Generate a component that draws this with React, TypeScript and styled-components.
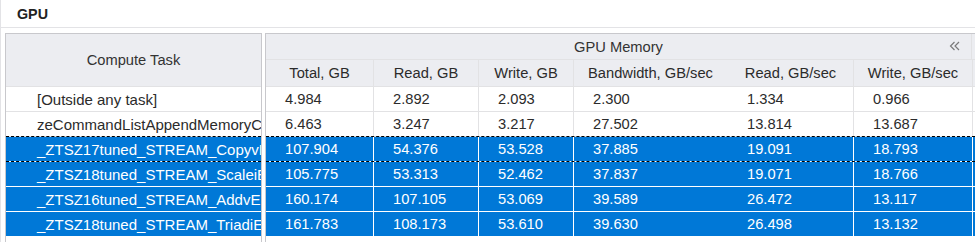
import React from 'react'
import styled, { createGlobalStyle, css } from 'styled-components'

const GlobalStyle = createGlobalStyle`
  html, body {
    margin: 0;
    padding: 0;
    background: #ffffff;
  }
  body {
    font-family: 'Liberation Sans', Arial, sans-serif;
    font-size: 14.7px;
    color: #2b2b2b;
  }
`

const BLUE = '#0078d7'
const HEADER_BG = '#ecedf1'
const OUTER = '#c8c8cc'
const LINE = '#e2e2e4'

const COLUMNS = '108px 105px 95px 154px 126px 119px 1fr'

const Panel = styled.div`
  height: 100vh;
  border-left: 1px solid #e3e3e6;
  display: flex;
  flex-direction: column;
  overflow: hidden;
`

const TitleBar = styled.div`
  height: 27px;
  flex: none;
  border-bottom: 1px solid #e3e3e6;
  display: flex;
  align-items: center;
  padding-left: 16px;
  font-weight: bold;
  font-size: 14.3px;
  color: #222;
`

const GridArea = styled.div`
  flex: 1;
  display: flex;
  gap: 3px;
  padding: 5px 0 0 4px;
  min-height: 0;
`

const FrozenPane = styled.div`
  width: 255px;
  flex: none;
  border: 1px solid ${OUTER};
  border-bottom: none;
  overflow: hidden;
`

const ScrollPane = styled.div`
  flex: 1;
  min-width: 0;
  border-top: 1px solid ${OUTER};
  border-left: 1px solid ${OUTER};
  overflow: hidden;
`

const TaskHeader = styled.div`
  height: 52px;
  background: ${HEADER_BG};
  border-bottom: 1px solid ${LINE};
  display: flex;
  align-items: center;
  justify-content: center;
  color: #333;
`

const GroupHeader = styled.div`
  height: 25px;
  background: ${HEADER_BG};
  border-bottom: 1px solid ${LINE};
  display: grid;
  grid-template-columns: 706px 1fr;
`

const GroupTitle = styled.div`
  position: relative;
  border-right: 1px solid ${LINE};
  display: flex;
  align-items: center;
  justify-content: center;
  color: #333;
`

const CollapseButton = styled.span`
  position: absolute;
  right: 10px;
  top: 6px;
  width: 12px;
  height: 12px;
  display: flex;
`

const Row = styled.div<{ $header?: boolean; $selected?: boolean; $focused?: boolean }>`
  position: relative;
  display: grid;
  grid-template-columns: ${COLUMNS};
  height: ${(p) => (p.$header ? '26px' : '24px')};
  border-bottom: 1px solid ${(p) => (p.$selected ? '#ffffff' : LINE)};
  background: ${(p) => (p.$header ? HEADER_BG : p.$selected ? BLUE : '#ffffff')};
  color: ${(p) => (p.$selected ? '#ffffff' : '#2b2b2b')};
  ${(p) =>
    p.$focused &&
    css`
      &::after {
        content: '';
        position: absolute;
        left: 0;
        right: 0;
        top: -1px;
        bottom: -1px;
        border-top: 1px dashed #000;
        border-bottom: 1px dashed #000;
        pointer-events: none;
      }
    `}
`

const TaskRow = styled(Row)`
  display: flex;
`

const Cell = styled.div<{ $header?: boolean; $selected?: boolean; $noLine?: boolean }>`
  display: flex;
  align-items: center;
  justify-content: ${(p) => (p.$header ? 'center' : 'flex-start')};
  padding-left: ${(p) => (p.$header ? '0' : '19px')};
  border-right: 1px solid
    ${(p) => (p.$noLine ? 'transparent' : p.$selected ? '#ffffff' : LINE)};
  white-space: nowrap;
  overflow: hidden;
  color: inherit;
`

const TaskCell = styled.div`
  flex: 1;
  min-width: 0;
  display: flex;
  align-items: center;
  padding-left: 31px;
  font-size: 15px;
  white-space: nowrap;
  overflow: hidden;
`

const headers = ['Total, GB', 'Read, GB', 'Write, GB', 'Bandwidth, GB/sec', 'Read, GB/sec', 'Write, GB/sec']

// the bandwidth column has no rule on its right edge in the reference
const NO_RULE = 3

type DataRow = { task: string; values: string[]; selected?: boolean; focused?: boolean }

const rows: DataRow[] = [
  { task: '[Outside any task]', values: ['4.984', '2.892', '2.093', '2.300', '1.334', '0.966'] },
  { task: 'zeCommandListAppendMemoryCopy', values: ['6.463', '3.247', '3.217', '27.502', '13.814', '13.687'] },
  {
    task: '_ZTSZ17tuned_STREAM_CopyvEN2cl4sycl',
    values: ['107.904', '54.376', '53.528', '37.885', '19.091', '18.793'],
    selected: true,
    focused: true,
  },
  {
    task: '_ZTSZ18tuned_STREAM_ScaleiEN2cl4sycl',
    values: ['105.775', '53.313', '52.462', '37.837', '19.071', '18.766'],
    selected: true,
  },
  {
    task: '_ZTSZ16tuned_STREAM_AddvEN2cl4sycl',
    values: ['160.174', '107.105', '53.069', '39.589', '26.472', '13.117'],
    selected: true,
  },
  {
    task: '_ZTSZ18tuned_STREAM_TriadiEN2cl4sycl',
    values: ['161.783', '108.173', '53.610', '39.630', '26.498', '13.132'],
    selected: true,
  },
]

function ChevronsLeft() {
  return (
    <svg width="12" height="12" viewBox="0 0 12 12" fill="none" stroke="#7a7a7a" strokeWidth="1.2">
      <path d="M5.5 2 L1.5 6 L5.5 10" />
      <path d="M10 2 L6 6 L10 10" />
    </svg>
  )
}

export default function App() {
  return (
    <Panel>
      <GlobalStyle />
      <TitleBar>GPU</TitleBar>
      <GridArea>
        <FrozenPane>
          <TaskHeader>Compute Task</TaskHeader>
          {rows.map((r) => (
            <TaskRow key={r.task} $selected={r.selected} $focused={r.focused}>
              <TaskCell>{r.task}</TaskCell>
            </TaskRow>
          ))}
        </FrozenPane>
        <ScrollPane>
          <GroupHeader>
            <GroupTitle>
              GPU Memory
              <CollapseButton>
                <ChevronsLeft />
              </CollapseButton>
            </GroupTitle>
            <div />
          </GroupHeader>
          <Row $header>
            {headers.map((h, i) => (
              <Cell key={h} $header $noLine={i === NO_RULE}>
                {h}
              </Cell>
            ))}
            <Cell $header $noLine />
          </Row>
          {rows.map((r) => (
            <Row key={r.task} $selected={r.selected} $focused={r.focused}>
              {r.values.map((v, i) => (
                <Cell key={i} $selected={r.selected} $noLine={i === NO_RULE}>
                  {v}
                </Cell>
              ))}
              <Cell $selected={r.selected} $noLine />
            </Row>
          ))}
        </ScrollPane>
      </GridArea>
    </Panel>
  )
}
